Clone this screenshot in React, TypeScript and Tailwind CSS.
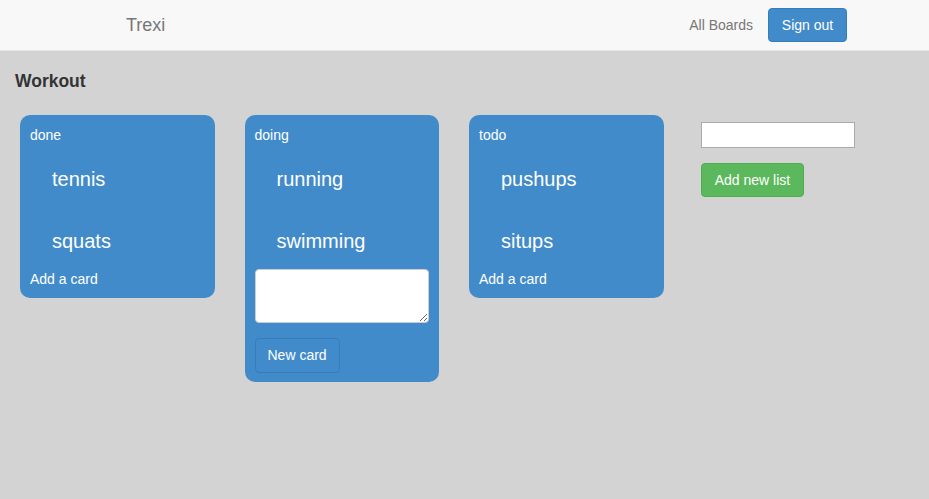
import React from "react";

const lists = [
  { title: "done", cards: ["tennis", "squats"], adding: false },
  { title: "doing", cards: ["running", "swimming"], adding: true },
  { title: "todo", cards: ["pushups", "situps"], adding: false },
];

const List = ({ title, cards, adding }: { title: string; cards: string[]; adding: boolean }) => {
  return (
    <div className="w-[194.5px] shrink-0 rounded-[10px] bg-[#428bca] px-[10px] pt-[10px] text-white">
      <div className="text-[14px] leading-5">{title}</div>
      {cards.map((c) => (
        <div key={c} className="h-[62px] pl-[22px] pt-[22px] text-[20px] leading-6">
          {c}
        </div>
      ))}
      {adding ? (
        <div className="pb-[9px]">
          <textarea className="block h-[54px] w-[174px] rounded-[4px] border border-[#ccc] bg-white" />
          <button className="mt-[15px] h-[35px] rounded-[4px] border border-[#357ebd] px-3 text-[14px] text-white">
            New card
          </button>
        </div>
      ) : (
        <div className="pb-[10px] pt-px text-[14px] leading-[18px]">Add a card</div>
      )}
    </div>
  );
};

export default function App() {
  return (
    <div className="min-h-screen bg-[#d3d3d3] font-['Liberation_Sans',Arial,sans-serif]">
      <nav className="flex h-[51px] items-center border-b border-[#e7e7e7] bg-[#f8f8f8] pl-[126px] pr-[82px]">
        <span className="text-[18px] text-[#777]">Trexi</span>
        <div className="ml-auto flex items-center gap-[15px]">
          <span className="text-[14px] text-[#777]">All Boards</span>
          <button className="h-[34px] w-[79px] rounded-[4px] border border-[#357ebd] bg-[#428bca] text-[14px] text-white">
            Sign out
          </button>
        </div>
      </nav>
      <main className="px-[15px] pt-[20px]">
        <h4 className="text-[17.5px] font-bold leading-5 text-[#333]">Workout</h4>
        <div className="mt-[24px] flex items-start gap-[30px] pl-[5px]">
          {lists.map((l) => (
            <List key={l.title} {...l} />
          ))}
          <div className="ml-[7.5px] pt-[7px]">
            <input className="block h-[26px] w-[154px] border border-[#aaa] bg-white" />
            <button className="mt-[15px] h-[34px] w-[103px] rounded-[4px] border border-[#4cae4c] bg-[#5cb85c] text-[14px] text-white">
              Add new list
            </button>
          </div>
        </div>
      </main>
    </div>
  );
}
